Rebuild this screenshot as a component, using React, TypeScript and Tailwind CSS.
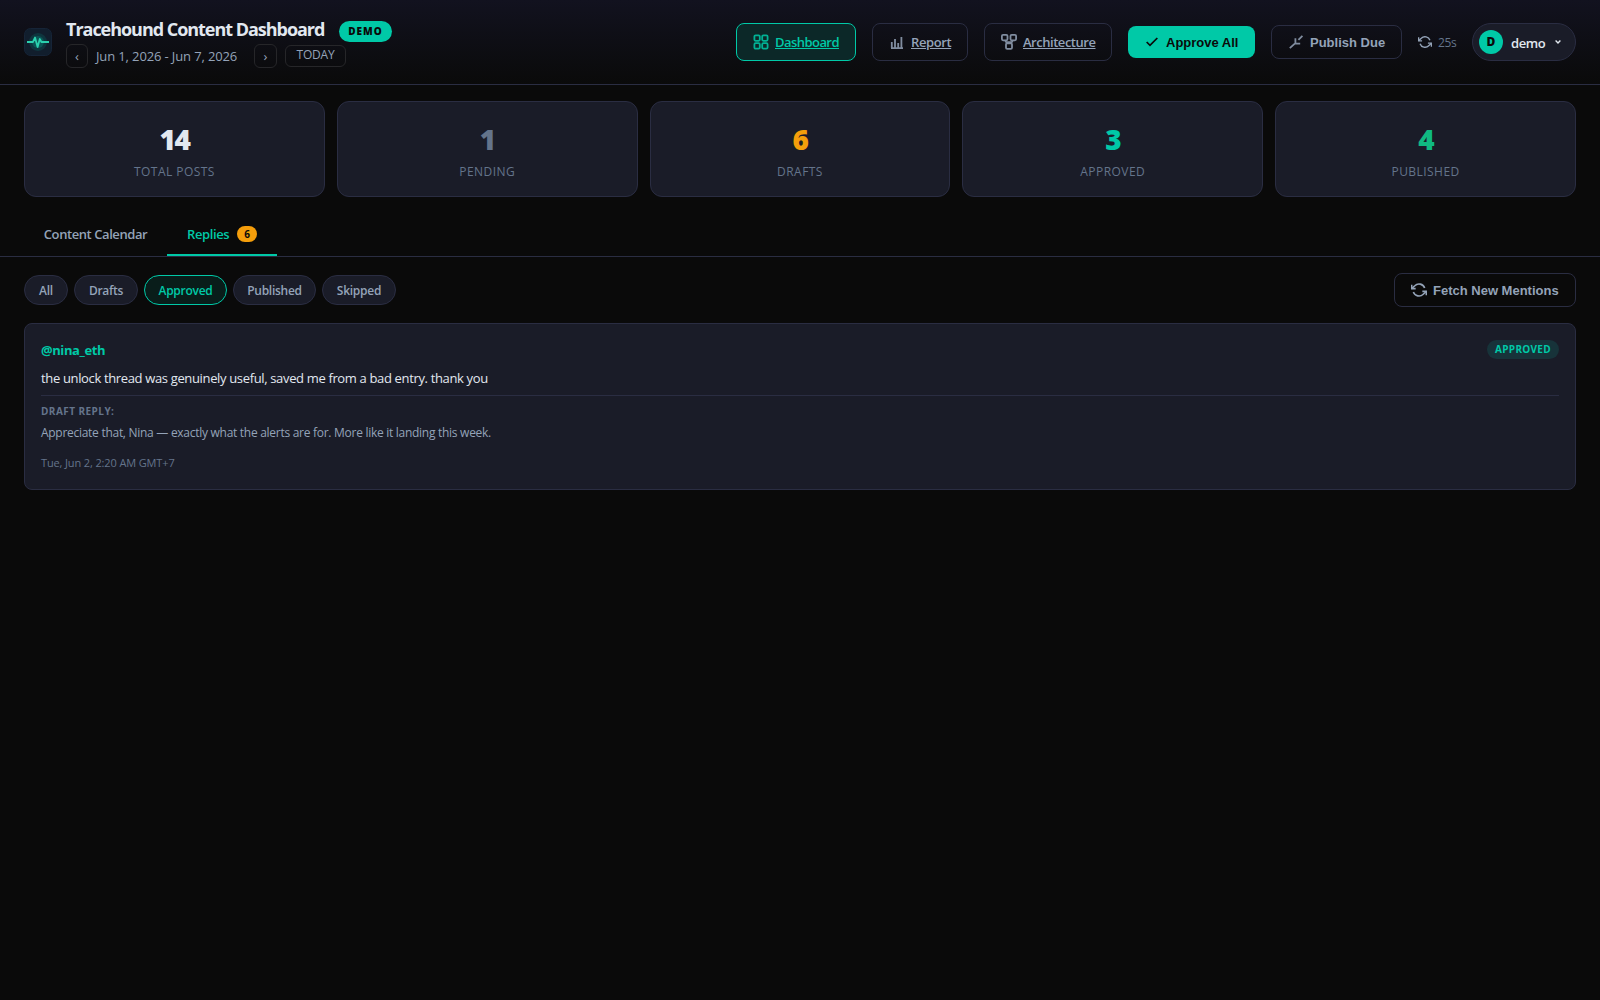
import React, { useState } from 'react';

const stats = [
  { label: 'Total Posts', value: 14, color: 'text-[#e2e8f0]' },
  { label: 'Pending', value: 1, color: 'text-[#64748b]' },
  { label: 'Drafts', value: 6, color: 'text-[#f59e0b]' },
  { label: 'Approved', value: 3, color: 'text-[#00c9a7]' },
  { label: 'Published', value: 4, color: 'text-[#10b981]' },
];

const filters = [
  { name: 'All', width: 'w-11' },
  { name: 'Drafts', width: 'w-16' },
  { name: 'Approved', width: 'w-[83px]' },
  { name: 'Published', width: 'w-[83px]' },
  { name: 'Skipped', width: 'w-[74px]' },
];

const replies = [
  {
    id: 1,
    author: '@nina_eth',
    status: 'Approved',
    text: 'the unlock thread was genuinely useful, saved me from a bad entry. thank you',
    draft: 'Appreciate that, Nina — exactly what the alerts are for. More like it landing this week.',
    date: 'Tue, Jun 2, 2:20 AM GMT+7',
  },
];

const Logo = () => (
  <svg className="w-7 h-7 shrink-0" viewBox="0 0 28 28" fill="none">
    <rect x="0.5" y="0.5" width="27" height="27" rx="6" fill="#111e2d" stroke="#162437" />
    <circle cx="14" cy="14" r="9" fill="#00c9a7" fillOpacity="0.14" />
    <circle cx="14" cy="14" r="6" fill="#00c9a7" fillOpacity="0.22" />
    <path d="M3 14h6l2-4.5 2.6 9.5 2.2-8 1.6 3H25" stroke="#2bd0ae" strokeWidth="1.8" strokeLinejoin="round" />
  </svg>
);

const GridIcon = () => (
  <svg className="w-4 h-4" viewBox="0 0 16 16" fill="none" stroke="currentColor" strokeWidth="1.8" opacity="0.85">
    <rect x="1.4" y="1.4" width="5.4" height="5.4" rx="1.2" />
    <rect x="9.2" y="1.4" width="5.4" height="5.4" rx="1.2" />
    <rect x="1.4" y="9.2" width="5.4" height="5.4" rx="1.2" />
    <rect x="9.2" y="9.2" width="5.4" height="5.4" rx="1.2" />
  </svg>
);

const ChartIcon = () => (
  <svg className="w-4 h-4" viewBox="0 0 16 16" fill="none" stroke="currentColor" strokeWidth="1.8" opacity="0.85">
    <path d="M2 14.2h12M2.8 14V8M6 14V5M9.2 14V9M12.4 14V3" />
  </svg>
);

const NodesIcon = () => (
  <svg className="w-4 h-4" viewBox="0 0 16 16" fill="none" stroke="currentColor" strokeWidth="1.8" opacity="0.85">
    <rect x="0.9" y="0.9" width="5.6" height="5.4" rx="1.2" />
    <rect x="9.5" y="0.9" width="5.6" height="5.4" rx="1.2" />
    <rect x="5" y="9.3" width="6" height="5.6" rx="1.2" />
    <path d="M4.2 6.3l1.3 2.3h5l1.3-2.3M6 8.2h4" />
  </svg>
);

const CheckIcon = () => (
  <svg className="w-4 h-4" viewBox="0 0 24 24" fill="none" stroke="currentColor" strokeWidth="2.6">
    <path d="M20 6L9 17l-5-5" />
  </svg>
);

const PublishIcon = () => (
  <svg className="w-4 h-4" viewBox="0 0 16 16" fill="none" stroke="currentColor" strokeWidth="1.8" opacity="0.85">
    <path d="M14.4 1.8l-4 4M7.4 4.3v5.4H12.2M1.8 14.2l5-4.6" />
  </svg>
);

const RefreshIcon = ({ className }: { className: string }) => (
  <svg className={className} viewBox="0 0 24 24" fill="none" stroke="currentColor" strokeWidth="2.4">
    <path d="M1 4v6h6M23 20v-6h-6" />
    <path d="M20.49 9A9 9 0 0 0 5.64 5.64L1 10m22 4l-4.64 4.36A9 9 0 0 1 3.51 15" />
  </svg>
);

const App = () => {
  const [tab, setTab] = useState('replies');
  const [filter, setFilter] = useState('Approved');

  return (
    <div className="min-h-screen bg-[#0a0a0a] text-[#e2e8f0] font-['Open_Sans',sans-serif]">
      <header className="h-[85px] px-6 flex items-center justify-between border-b border-[#2a2d42] bg-linear-to-b from-[#12121f] to-[#0a0a0a]">
        <div className="flex items-center">
          <Logo />
          <div className="ml-3.5">
            <div className="flex items-center h-7">
              <h1 className="w-[258px] pb-[3px] text-lg leading-6 font-bold tracking-[-1.03px] whitespace-nowrap">Tracehound Content Dashboard</h1>
              <span className="ml-[15px] mt-0.5 w-[53px] h-[21px] rounded-full bg-[#00c9a7] text-[#0a0a0a] text-[10px] leading-[21px] font-extrabold tracking-[1px] text-center">DEMO</span>
            </div>
            <div className="flex items-center h-6 text-[#94a3b8]">
              <button className="w-[22px] h-6 rounded-md border border-[#262629] text-[13px] leading-5">‹</button>
              <span className="ml-2 w-[158px] pt-px text-[13px] tracking-[-0.13px] whitespace-nowrap">Jun 1, 2026 - Jun 7, 2026</span>
              <button className="w-[23px] h-6 rounded-md border border-[#262629] text-[13px] leading-5">›</button>
              <button className="ml-2 w-[61px] h-[22px] pb-0.5 rounded-md border border-[#262629] text-xs leading-[18px] tracking-[-0.2px]">TODAY</button>
            </div>
          </div>
        </div>

        <div className="flex items-center gap-4 text-[13px] font-semibold text-[#94a3b8]">
          <a className="w-[120px] h-[38px] pl-4 flex items-center gap-1.5 rounded-lg border border-[#00c9a7] bg-[#0c2828] text-[#00c9a7]">
            <GridIcon />
            <span className="pt-px underline tracking-[-0.55px]">Dashboard</span>
          </a>
          <a className="w-24 h-[38px] pl-4 flex items-center gap-1.5 rounded-lg border border-[#2a2d42]">
            <ChartIcon />
            <span className="pt-px underline tracking-[-0.4px]">Report</span>
          </a>
          <a className="w-32 h-[38px] pl-4 flex items-center gap-1.5 rounded-lg border border-[#2a2d42]">
            <NodesIcon />
            <span className="pt-px underline tracking-[-0.47px]">Architecture</span>
          </a>
          <button className="w-[127px] h-8 pl-4 flex items-center gap-1.5 rounded-lg bg-[#00c9a7] text-[#0a0a0a] font-['Liberation_Sans',sans-serif]">
            <CheckIcon />
            <span className="pt-px">Approve All</span>
          </button>
          <button className="w-[131px] h-[34px] pl-4 flex items-center gap-1.5 rounded-lg border border-[#2a2d42] font-['Liberation_Sans',sans-serif]">
            <PublishIcon />
            <span className="pt-px">Publish Due</span>
          </button>
          <div className="w-[38px] flex items-center gap-1.5 text-xs font-normal text-[#64748b]">
            <RefreshIcon className="w-3.5 h-3.5 shrink-0 text-[#94a3b8]" />
            <span className="pt-px tracking-[-0.4px]">25s</span>
          </div>
          <button className="w-[104px] h-[38px] pl-1.5 flex items-center rounded-full border border-[#2a2d42] bg-[#1a1c28] text-[#e2e8f0]">
            <span className="w-6 h-6 rounded-full bg-[#00c9a7] text-[#0a0a0a] text-xs leading-6 font-extrabold">D</span>
            <span className="ml-2 pt-[3px] w-11 text-left tracking-[-0.4px]">demo</span>
            <svg className="w-1.5 h-1.5" viewBox="0 0 6 6" fill="none" stroke="currentColor" strokeWidth="1.4">
              <path d="M0.6 1.6L3 4l2.4-2.4" />
            </svg>
          </button>
        </div>
      </header>

      <section className="px-6 pt-4 grid grid-cols-5 gap-3">
        {stats.map((stat) => (
          <div key={stat.label} className="h-24 pt-[19px] rounded-xl border border-[#2a2d42] bg-[#1a1c28] text-center">
            <div className={`text-[28px] leading-9 font-extrabold tracking-[-1.5px] ${stat.color}`}>{stat.value}</div>
            <div className="mt-1.5 text-xs leading-[18px] font-medium tracking-[0.45px] uppercase text-[#64748b]">{stat.label}</div>
          </div>
        ))}
      </section>

      <nav className="mt-4 h-11 px-6 flex border-b border-[#2a2d42] text-[13px] font-semibold text-[#94a3b8]">
        <button
          onClick={() => setTab('calendar')}
          className={`w-[143px] h-[43px] pt-0.5 border-b-2 tracking-[-0.43px] ${tab === 'calendar' ? 'border-[#00c9a7] text-[#00c9a7]' : 'border-transparent'}`}
        >
          Content Calendar
        </button>
        <button
          onClick={() => setTab('replies')}
          className={`w-[110px] h-[43px] pl-5 flex items-center border-b-2 tracking-[-0.4px] ${tab === 'replies' ? 'border-[#00c9a7] text-[#00c9a7]' : 'border-transparent'}`}
        >
          <span className="w-[50px] pt-0.5 text-left">Replies</span>
          <span className="w-5 h-4 rounded-full bg-[#f59e0b] text-[#0a0a0a] text-[10px] leading-4 font-bold">6</span>
        </button>
      </nav>

      <main className="px-6 pt-4">
        <div className="h-[34px] flex items-center justify-between text-[#94a3b8] font-semibold">
          <div className="flex gap-1.5">
            {filters.map(({ name, width }) => (
              <button
                key={name}
                onClick={() => setFilter(name)}
                className={`${width} h-[30px] pt-0.5 rounded-full border text-xs tracking-[-0.27px] ${
                  filter === name
                    ? 'border-[#00c9a7] bg-[#091d1a] text-[#00c9a7]'
                    : 'border-[#2a2d42] bg-[#1a1c28]'
                }`}
              >
                {name}
              </button>
            ))}
          </div>
          <button className="w-[182px] h-[34px] pl-4 flex items-center gap-1.5 rounded-lg border border-[#2a2d42] text-[13px] whitespace-nowrap font-['Liberation_Sans',sans-serif]">
            <RefreshIcon className="w-4 h-4 shrink-0" />
            <span className="pt-px">Fetch New Mentions</span>
          </button>
        </div>

        {replies.map((reply) => (
          <article key={reply.id} className="mt-4 h-[167px] p-4 rounded-lg border border-[#2a2d42] bg-[#1a1c28]">
            <div className="flex justify-between">
              <span className="text-[13px] leading-5 font-bold tracking-[-0.42px] text-[#00c9a7]">{reply.author}</span>
              <span className="w-[72px] h-[19px] rounded-full bg-[#17333a] text-[#00c9a7] text-[10px] leading-[19px] font-bold tracking-[0.3px] uppercase text-center">{reply.status}</span>
            </div>
            <p className="mt-2 text-[13px] leading-5 tracking-[-0.35px]">{reply.text}</p>
            <div className="mt-[7px] pt-[7px] border-t border-[#2a2d42]">
              <div className="text-[10px] leading-4 font-bold tracking-[0.45px] uppercase text-[#64748b]">Draft reply:</div>
              <p className="mt-[5px] text-xs leading-[18px] tracking-[-0.28px] text-[#94a3b8]">{reply.draft}</p>
            </div>
            <div className="mt-3 text-[11px] leading-[18px] tracking-[-0.13px] text-[#64748b]">{reply.date}</div>
          </article>
        ))}
      </main>
    </div>
  );
};

export default App;
